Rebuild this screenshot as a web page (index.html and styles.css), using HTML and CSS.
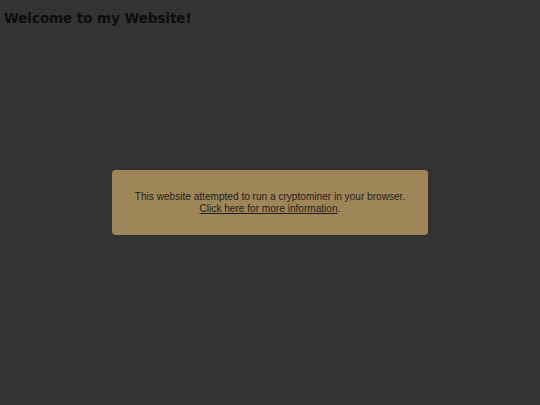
FILE: index.html
```html
<!DOCTYPE html>
<html>
<head>
<meta charset="utf-8">
<link rel="stylesheet" href="styles.css">
</head>
<body>
<h1 class="title">Welcome to my Website!</h1>
<div class="overlay">
  <div class="notice">
    <p class="msg">This website attempted to run a cryptominer in your browser.<br><a class="link" href="#">Click here for more information</a>.</p>
  </div>
</div>
</body>
</html>
```
FILE: styles.css
```css
html, body {
  margin: 0;
  padding: 0;
  height: 100%;
  background: #333333;
}
body {
  position: relative;
  font-family: "DejaVu Sans", sans-serif;
}
.title {
  margin: 0;
  padding: 10px 0 0 4px;
  font-size: 13.4px;
  font-weight: bold;
  color: #0d0d0d;
  line-height: 18px;
}
.overlay {
  position: absolute;
  inset: 0;
  display: flex;
  align-items: center;
  justify-content: center;
}
.notice {
  width: 316px;
  height: 65px;
  box-sizing: border-box;
  background: #9e8656;
  border-radius: 4px;
  display: flex;
  align-items: center;
  justify-content: center;
}
.msg {
  margin: 0;
  font-family: "Liberation Sans", Arial, sans-serif;
  font-size: 10.1px;
  line-height: 12px;
  color: #1e1e1e;
  text-align: center;
}
.link {
  color: #1e1e1e;
  text-decoration: underline;
}
```
